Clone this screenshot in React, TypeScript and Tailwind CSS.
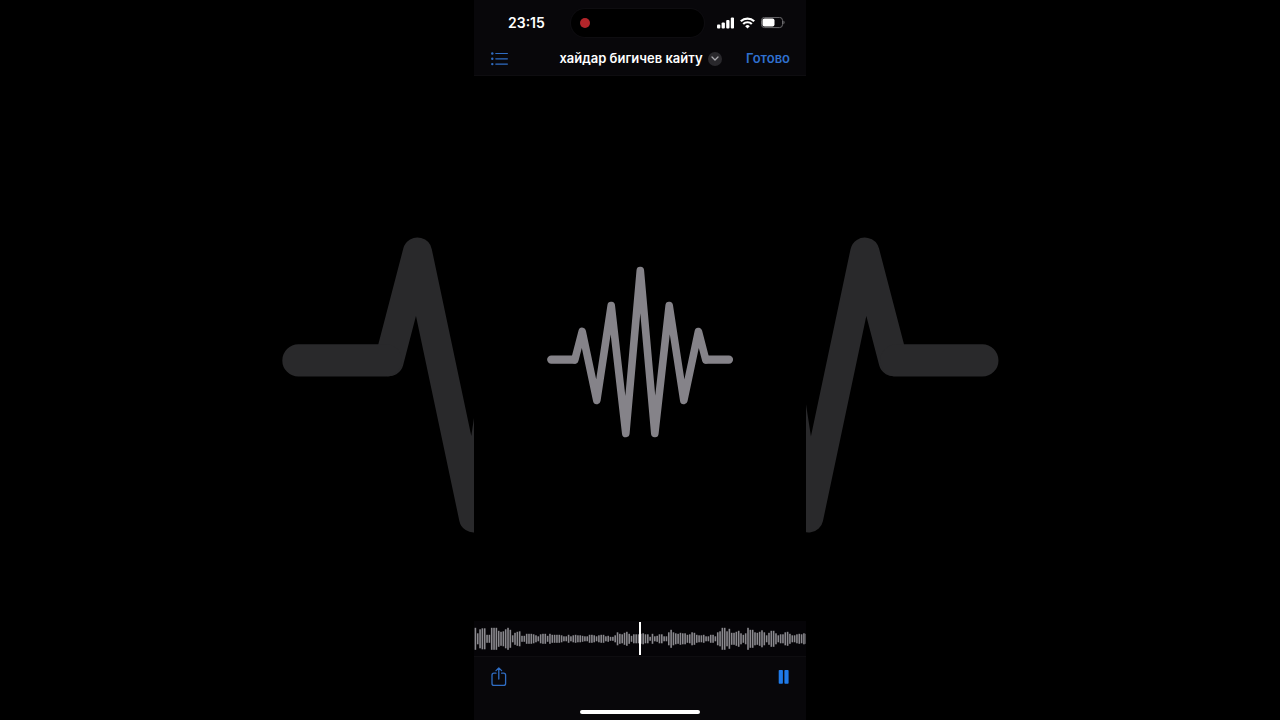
import type { ReactNode } from "react";

const AMPLITUDES = [
  22, 11, 19, 21, 21, 8, 8, 22, 22, 22, 16, 14, 15, 19, 22, 18, 7, 12, 14, 15,
  6, 6, 10, 10, 10, 9, 7, 5, 9, 10, 10, 6, 10, 8, 8, 8, 8, 7, 5, 5, 8, 5, 7, 8,
  7, 7, 6, 5, 5, 8, 8, 7, 5, 7, 8, 8, 5, 6, 4, 4, 7, 13, 10, 9, 12, 14, 10, 6,
  9, 9, 9, 10, 11, 9, 9, 4, 10, 5, 6, 9, 9, 5, 5, 13, 18, 13, 11, 10, 12, 11,
  11, 8, 9, 13, 12, 8, 7, 7, 8, 5, 5, 8, 8, 5, 13, 15, 22, 22, 15, 20, 12, 12,
  14, 16, 11, 8, 11, 22, 18, 18, 13, 12, 14, 17, 13, 7, 12, 16, 16, 11, 7, 9,
  9, 13, 14, 10, 7, 7, 9, 10, 9, 11, 10,
];

const BAR_PITCH = 2.33;

interface WaveGlyphProps {
  className?: string;
}

const WaveGlyph = ({ className }: WaveGlyphProps) => (
  <svg
    viewBox="-166 -93.5 332 187"
    fill="none"
    stroke="currentColor"
    strokeLinecap="round"
    strokeLinejoin="round"
    className={className}
    aria-hidden="true"
  >
    <path
      strokeWidth={7.6}
      d="M-65.2.4-57.8-28-43.2 41-28.8-54-14.2 74 .3-89 14.8 74 29.2-54 43.8 41 58.4-28 65.8.4"
    />
    <path strokeWidth={8.4} d="M-88.7.1H-66M66.600.1H88.9" />
  </svg>
);

const SignalIcon = () => (
  <svg width="17" height="12" viewBox="0 0 17 12" fill="#fff" aria-hidden="true">
    <rect x="0" y="7.5" width="3.3" height="4" rx="1" />
    <rect x="4.6" y="5.5" width="3.3" height="6" rx="1" />
    <rect x="9.2" y="3" width="3.3" height="8.5" rx="1" />
    <rect x="13.8" y="0.5" width="3.3" height="11" rx="1" />
  </svg>
);

const WifiIcon = () => (
  <svg width="15" height="12" viewBox="0 0 15 12" aria-hidden="true">
    <g fill="none" stroke="#fff" strokeWidth="2.2">
      <path d="M.8 4.3a9.500 9.500 0 0 1 13.400 0" />
      <path d="M3.2 7a6.100 6.100 0 0 1 8.600 0" />
    </g>
    <path d="M7.5 11.5 5.2 9.2a3.2 3.2 0 0 1 4.6 0Z" fill="#fff" />
  </svg>
);

const BatteryIcon = () => (
  <svg width="24" height="12" viewBox="0 0 24 12" aria-hidden="true">
    <rect
      x="0.5"
      y="0.4"
      width="21"
      height="10.2"
      rx="3"
      fill="none"
      stroke="#6b6a6d"
    />
    <rect x="1.5" y="1.4" width="12" height="8.2" rx="2" fill="#fff" />
    <path d="M22.4 3.6c1.6.5 1.6 3.300 0 3.800Z" fill="#6b6a6d" />
  </svg>
);

const ListIcon = () => (
  <svg width="17" height="14" viewBox="0 0 17 14" fill="#2f6dc4" aria-hidden="true">
    <circle cx="1.3" cy="1.5" r="1.2" />
    <circle cx="1.3" cy="6.8" r="1.2" />
    <circle cx="1.3" cy="12.1" r="1.2" />
    <path
      d="M4.8 1.5H16.4M4.8 6.8H16.4M4.8 12.1H16.4"
      stroke="#2f6dc4"
      strokeWidth="1.2"
      strokeLinecap="round"
    />
  </svg>
);

const ShareIcon = () => (
  <svg
    width="16"
    height="20"
    viewBox="0 0 16 20"
    fill="none"
    stroke="#2f6dc4"
    strokeWidth="1.3"
    strokeLinecap="round"
    strokeLinejoin="round"
    aria-hidden="true"
  >
    <path d="M5 6.2H3a2 2 0 0 0-2 2v8.200a2 2 0 0 0 2 2h9.600a2 2 0 0 0 2-2V8.200a2 2 0 0 0-2-2h-2" />
    <path d="M7.800 12V1M5 3.600 7.800.9l2.800 2.700" />
  </svg>
);

const PauseIcon = () => (
  <svg width="11" height="14" viewBox="0 0 11 14" fill="#1f7ae8" aria-hidden="true">
    <rect x="0.7" y="0" width="4.2" height="13.8" rx="0.8" />
    <rect x="6.4" y="0" width="4.2" height="13.8" rx="0.8" />
  </svg>
);

interface IconButtonProps {
  label: string;
  children: ReactNode;
}

const IconButton = ({ label, children }: IconButtonProps) => (
  <button type="button" aria-label={label} className="flex items-center">
    {children}
  </button>
);

const StatusBar = () => (
  <div className="grid h-[46px] grid-cols-[97px_1fr_102px] items-center">
    <time className="pl-[34px] text-sm font-semibold">23:15</time>
    <div className="flex h-7 items-center rounded-full bg-black px-[9px] ring-1 ring-[#0e0d10]">
      <span className="size-[10px] rounded-full bg-[#b3252a]" />
    </div>
    <div className="flex items-center gap-[6px] pl-[13px]">
      <SignalIcon />
      <WifiIcon />
      <BatteryIcon />
    </div>
  </div>
);

const NavBar = () => (
  <nav className="grid h-[29px] grid-cols-[1fr_auto_1fr] items-center pr-4 pb-1 pl-[17px]">
    <IconButton label="Список">
      <ListIcon />
    </IconButton>
    <button type="button" className="flex items-center gap-[5px]">
      <span className="text-[13px] font-semibold">хайдар бигичев кайту</span>
      <span className="flex size-[14px] items-center justify-center rounded-full bg-[#29282c]">
        <svg
          width="8"
          height="5"
          viewBox="0 0 8 5"
          fill="none"
          stroke="#a9a8ad"
          strokeWidth="1.3"
          strokeLinecap="round"
          strokeLinejoin="round"
          aria-hidden="true"
        >
          <path d="M1 1l3 3 3-3" />
        </svg>
      </span>
    </button>
    <button
      type="button"
      className="justify-self-end text-[13px] font-semibold text-[#2f70cf]"
    >
      Готово
    </button>
  </nav>
);

const Timeline = () => (
  <div className="relative h-[35px] bg-[#050407]">
    <svg
      viewBox="0 0 332 35"
      preserveAspectRatio="none"
      className="size-full"
      fill="#8b8a8f"
      aria-hidden="true"
    >
      {AMPLITUDES.map((height, index) => (
        <rect
          key={index}
          x={0.6 + index * BAR_PITCH}
          y={17.8 - height / 2}
          width={1.6}
          height={height}
        />
      ))}
    </svg>
    <span className="absolute inset-y-0 left-1/2 my-px w-[2px] -translate-x-1/2 bg-white" />
  </div>
);

export default function App() {
  return (
    <div className="relative flex h-screen justify-center overflow-hidden bg-black font-['Inter',sans-serif] text-white">
      <WaveGlyph className="absolute inset-0 size-full text-[#29292b]" />
      <div className="relative flex aspect-[332/720] h-full flex-col bg-black">
        <header className="border-b border-[#0e0d10] bg-[#08070a]">
          <StatusBar />
          <NavBar />
        </header>
        <main className="flex flex-1 items-center pt-[22px]">
          <WaveGlyph className="w-full text-[#858389]" />
        </main>
        <Timeline />
        <footer className="flex flex-col border-t border-[#0e0d10] bg-[#08070a]">
          <div className="flex h-10 items-center justify-between px-[17px]">
            <IconButton label="Поделиться">
              <ShareIcon />
            </IconButton>
            <IconButton label="Пауза">
              <PauseIcon />
            </IconButton>
          </div>
          <div className="flex justify-center pt-[13px] pb-[6px]">
            <span className="h-1 w-[120px] rounded-full bg-white" />
          </div>
        </footer>
      </div>
    </div>
  );
}
